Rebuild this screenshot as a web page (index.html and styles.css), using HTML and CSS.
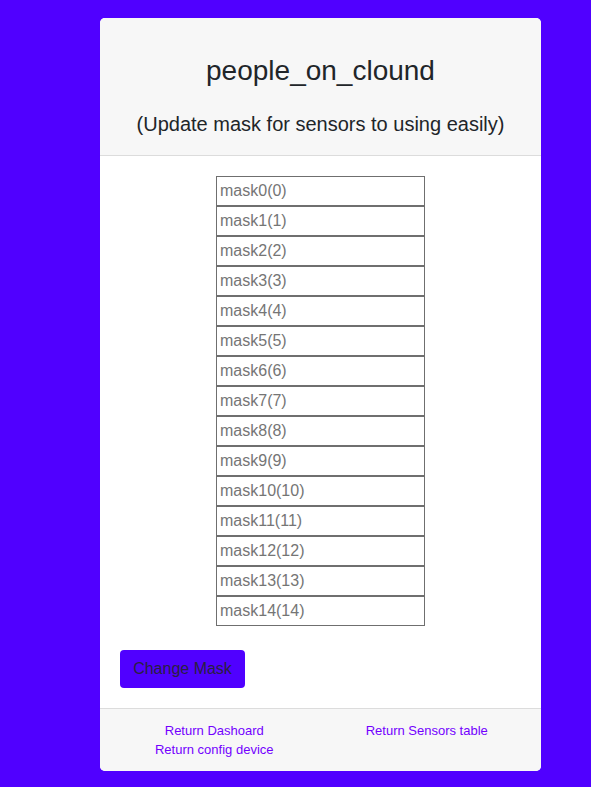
FILE: index.html
```html
<!DOCTYPE html>
<html>
<head>
<meta charset="utf-8">
<link rel="stylesheet" href="styles.css">
</head>
<body>
<div class="card">
  <div class="card-header">
    <h1 class="title">people_on_clound</h1>
    <p class="subtitle">(Update mask for sensors to using easily)</p>
  </div>
  <div class="card-body">
    <div class="inputs">
      <input class="mask" placeholder="mask0(0)">
      <input class="mask" placeholder="mask1(1)">
      <input class="mask" placeholder="mask2(2)">
      <input class="mask" placeholder="mask3(3)">
      <input class="mask" placeholder="mask4(4)">
      <input class="mask" placeholder="mask5(5)">
      <input class="mask" placeholder="mask6(6)">
      <input class="mask" placeholder="mask7(7)">
      <input class="mask" placeholder="mask8(8)">
      <input class="mask" placeholder="mask9(9)">
      <input class="mask" placeholder="mask10(10)">
      <input class="mask" placeholder="mask11(11)">
      <input class="mask" placeholder="mask12(12)">
      <input class="mask" placeholder="mask13(13)">
      <input class="mask" placeholder="mask14(14)">
    </div>
    <button class="btn">Change Mask</button>
  </div>
  <div class="card-footer">
    <div class="col">
      <a href="#">Return Dashoard</a>
      <a href="#">Return config device</a>
    </div>
    <div class="col">
      <a href="#">Return Sensors table</a>
    </div>
  </div>
</div>
</body>
</html>
```

FILE: styles.css
```css
html, body {
  margin: 0;
  padding: 0;
}
body {
  background: #5000ff;
  font-family: "Liberation Sans", Arial, sans-serif;
  color: #212529;
  min-height: 787px;
  padding-top: 18px;
  box-sizing: border-box;
}
.card {
  width: 441px;
  margin-left: 100px;
  background: #fff;
  border-radius: 5px;
  overflow: hidden;
}
.card-header {
  background: #f7f7f7;
  border-bottom: 1px solid #dcdcdc;
  text-align: center;
  padding: 37px 0 19px;
}
.title {
  margin: 0;
  font-size: 28px;
  font-weight: normal;
  line-height: 32px;
}
.subtitle {
  margin: 25px 0 0;
  font-size: 20px;
  line-height: 24px;
}
.card-body {
  padding: 20px 20px 20px;
}
.inputs {
  display: flex;
  flex-direction: column;
  align-items: center;
}
.mask {
  display: block;
  width: 209px;
  height: 30px;
  box-sizing: border-box;
  border: 1px solid #6f6f6f;
  margin: 0;
  padding: 0 3px;
  font-family: "Liberation Sans", Arial, sans-serif;
  font-size: 16px;
  color: #333;
}
.mask::placeholder {
  color: #757575;
}
.btn {
  margin-top: 24px;
  width: 125px;
  height: 38px;
  border: none;
  border-radius: 4px;
  background: #5000ff;
  color: #2b2140;
  font-family: "Liberation Sans", Arial, sans-serif;
  font-size: 16px;
  padding: 0;
}
.card-footer {
  background: #f7f7f7;
  border-top: 1px solid #dcdcdc;
  display: flex;
  padding: 12px 8px 12px;
}
.col {
  flex: 1;
  display: flex;
  flex-direction: column;
  align-items: center;
}
.col a {
  color: #7300ff;
  text-decoration: none;
  font-size: 13px;
  line-height: 19px;
}
```
